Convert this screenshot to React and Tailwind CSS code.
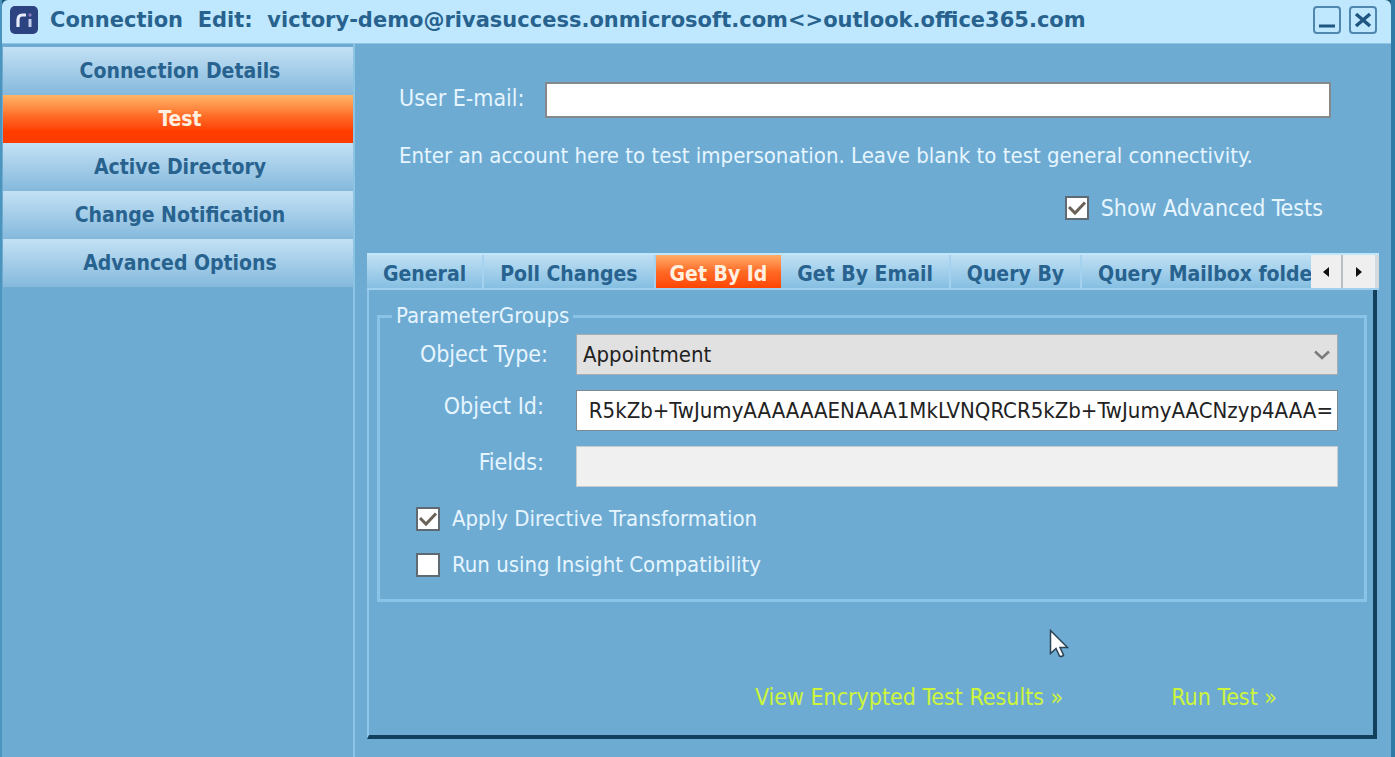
import { useEffect, useRef, useState } from "react";

const SECTIONS = [
  "Connection Details",
  "Test",
  "Active Directory",
  "Change Notification",
  "Advanced Options",
];

const TABS = [
  "General",
  "Poll Changes",
  "Get By Id",
  "Get By Email",
  "Query By",
  "Query Mailbox folders",
];

function TitleBar() {
  return (
    <header className="flex h-11 items-center rounded-t-md border-b border-[#8fc3e0] bg-[#bfe8ff] pr-3.5 pb-1 pl-2">
      <svg viewBox="0 0 28 28" className="mr-3 size-7 shrink-0" aria-hidden="true">
        <rect width="28" height="28" rx="5" fill="#2b4380" />
        <path d="M8 21v-7q0-5 4.500-5h3.500" fill="none" stroke="#e6ecfa" strokeWidth="3.200" />
        <path d="M20 13v8" fill="none" stroke="#c3cdea" strokeWidth="3" />
        <circle cx="20" cy="9" r="1.700" fill="#8a78b8" />
      </svg>
      <h1 className="min-w-0 flex-1 truncate font-['DejaVu_Sans',sans-serif] text-[21px] leading-7 font-bold whitespace-pre text-[#28628e]">
        Connection  Edit:  victory-demo@rivasuccess.onmicrosoft.com&lt;&gt;outlook.office365.com
      </h1>
      <div className="flex gap-2">
        <button
          type="button"
          aria-label="Minimize"
          className="flex size-7 items-center justify-center rounded-sm border-2 border-[#4f87ae]"
        >
          <svg viewBox="0 0 20 20" className="size-5" aria-hidden="true">
            <path d="M2 16h16" stroke="#1f5780" strokeWidth="3" />
          </svg>
        </button>
        <button
          type="button"
          aria-label="Close"
          className="flex size-7 items-center justify-center rounded-sm border-2 border-[#4f87ae]"
        >
          <svg viewBox="0 0 20 20" className="size-5" aria-hidden="true">
            <path d="M3 4l14 12M17 4L3 16" stroke="#1f5780" strokeWidth="3.500" />
          </svg>
        </button>
      </div>
    </header>
  );
}

function Sidebar({ active, onSelect }) {
  return (
    <nav className="w-[353px] shrink-0 border-r-2 border-[#8cc4e4] pt-[3px] pl-px">
      {SECTIONS.map((name) => (
        <button
          key={name}
          type="button"
          onClick={() => onSelect(name)}
          className={
            name === active
              ? "block h-12 w-full bg-linear-to-b from-[#ffb566] via-[#ff6a25] via-45% to-[#ff3c00] to-75% pt-0.5 pl-1 text-[21px] font-bold text-[#fff0e0]"
              : "block h-12 w-full bg-linear-to-b from-[#c3e1f4] to-[#84b9dc] pt-0.5 pl-1 text-[21px] font-bold text-[#28628e]"
          }
        >
          {name}
        </button>
      ))}
    </nav>
  );
}

function CheckBox({ label, defaultChecked }) {
  return (
    <label className="flex w-fit items-center gap-3 leading-7">
      <span className="relative size-6">
        <input
          type="checkbox"
          defaultChecked={defaultChecked}
          className="peer block size-6 appearance-none border-2 border-[#5f6a72] bg-white"
        />
        <svg
          viewBox="0 0 24 24"
          className="pointer-events-none absolute inset-0 hidden size-6 peer-checked:block"
          aria-hidden="true"
        >
          <path d="M4 11l6 6L20 6.500" fill="none" stroke="#6b6257" strokeWidth="3" />
        </svg>
      </span>
      {label}
    </label>
  );
}

function TabStrip({ active, onSelect }) {
  return (
    <div className="flex h-[37px] border-t-2 border-b-2 border-t-[#bfe6fb] border-b-[#a0d0ee] bg-linear-to-b from-[#bfe0f4] to-[#86bfe2]">
      <div role="tablist" className="flex min-w-0 flex-1 overflow-hidden">
        {TABS.map((name) => (
          <button
            key={name}
            type="button"
            role="tab"
            aria-selected={name === active}
            onClick={() => onSelect(name)}
            className={
              name === active
                ? "shrink-0 bg-linear-to-b from-[#ffac66] via-[#ff6a25] to-[#ff4400] px-3.5 pt-1 text-[21px] leading-7 font-bold text-[#fff0e0]"
                : "shrink-0 border-r-2 border-[#a5d2ee] px-4 pt-1 text-[21px] leading-7 font-bold whitespace-nowrap text-[#28628e]"
            }
          >
            {name}
          </button>
        ))}
      </div>
      <div className="flex bg-[#d3dbe0] pr-1">
        <button
          type="button"
          aria-label="Previous tabs"
          className="flex w-8 items-center justify-center border-r-2 border-[#b9bec2] bg-[#efefef]"
        >
          <svg viewBox="0 0 8 10" className="h-2.5 w-2" aria-hidden="true">
            <path d="M7 0v10L1 5z" fill="#111" />
          </svg>
        </button>
        <button
          type="button"
          aria-label="Next tabs"
          className="flex w-8 items-center justify-center bg-[#efefef]"
        >
          <svg viewBox="0 0 8 10" className="h-2.5 w-2" aria-hidden="true">
            <path d="M1 0v10l6-5z" fill="#111" />
          </svg>
        </button>
      </div>
    </div>
  );
}

function ParameterGroups() {
  const idRef = useRef(null);

  // long ids are shown from their end
  useEffect(() => {
    idRef.current.scrollLeft = idRef.current.scrollWidth;
  }, []);

  return (
    <fieldset className="mt-3 mr-1.5 ml-2 border-3 border-[#8ac3e8] pr-[26px] pb-5 pl-9">
      <legend className="-ml-6 px-1 text-[22px] leading-7">ParameterGroups</legend>

      <div className="grid grid-cols-[132px_1fr] items-start gap-x-7 gap-y-[15px] pt-1 text-[22px] leading-7">
        <label htmlFor="object-type" className="pt-1.5 text-right text-[23px]">
          Object Type:
        </label>
        <div className="relative">
          <select
            id="object-type"
            className="h-[41px] w-full appearance-none border border-[#a5adb3] bg-[#e1e1e1] px-1.5 text-[#222]"
          >
            <option>Appointment</option>
          </select>
          <svg
            viewBox="0 0 16 10"
            className="pointer-events-none absolute top-4 right-2 h-2.5 w-4"
            aria-hidden="true"
          >
            <path d="M1 1.500l7 6.500 7-6.500" fill="none" stroke="#7b7b7b" strokeWidth="2.500" />
          </svg>
        </div>

        <label htmlFor="object-id" className="pt-0.5 pr-1 text-right text-[23px]">
          Object Id:
        </label>
        <input
          id="object-id"
          ref={idRef}
          type="text"
          defaultValue="R5kZb+TwJumyAAAAAAENAAA1MkLVNQRCR5kZb+TwJumyAACNzyp4AAA="
          className="h-[41px] w-full border border-[#7d8a93] bg-white px-1 text-right text-[#222]"
        />

        <label htmlFor="fields" className="pt-0.5 pr-1 text-right text-[23px]">
          Fields:
        </label>
        <input
          id="fields"
          type="text"
          disabled
          className="h-[41px] w-full border border-[#c5ccd0] bg-[#f0f0f0] px-1"
        />
      </div>

      <div className="mt-[18px] grid gap-[18px] text-[22px]">
        <CheckBox label="Apply Directive Transformation" defaultChecked />
        <CheckBox label="Run using Insight Compatibility" />
      </div>
    </fieldset>
  );
}

export default function App() {
  const [section, setSection] = useState("Test");
  const [tab, setTab] = useState("Get By Id");

  return (
    <div className="flex min-h-screen flex-col border-r-4 border-l-2 border-r-[#2d7ba6] border-l-[#4b94bd] bg-[#1f5a7d] font-['DejaVu_Sans_Condensed','DejaVu_Sans',sans-serif] text-[#e6f5ff]">
      <TitleBar />
      <div className="flex flex-1 bg-[#6dabd2]">
        <Sidebar active={section} onSelect={setSection} />

        <main className="flex min-w-0 flex-1 flex-col pr-3 pb-[18px] pl-3">
          <div className="pt-[38px] pr-12 pl-8">
            <div className="flex items-start gap-5">
              <label htmlFor="email" className="pt-0.5 text-[23px] leading-7">
                User E-mail:
              </label>
              <input
                id="email"
                type="email"
                className="h-9 min-w-0 flex-1 border-2 border-[#85898c] bg-white px-1 text-[22px] text-[#222]"
              />
            </div>
            <p className="mt-6 text-[22px] leading-7">
              Enter an account here to test impersonation. Leave blank to test general connectivity.
            </p>
            <div className="mt-6 flex justify-end pr-2 text-[23px]">
              <CheckBox label="Show Advanced Tests" defaultChecked />
            </div>
          </div>

          <section className="mt-[31px] flex flex-1 flex-col">
            <TabStrip active={tab} onSelect={setTab} />
            <div className="mr-0.5 flex flex-1 flex-col border-r-4 border-b-4 border-l-2 border-r-[#123f5c] border-b-[#123f5c] border-l-[#8fc6ea]">
              <ParameterGroups />
              <div className="relative mt-auto flex justify-end gap-[108px] pr-24 pb-6 text-[23px] leading-7 text-[#cdf53c]">
                <a href="#results">View Encrypted Test Results »</a>
                <a href="#run">Run Test »</a>
                <svg
                  viewBox="0 0 20 30"
                  className="pointer-events-none absolute right-[304px] bottom-[76px] h-[30px] w-5"
                  aria-hidden="true"
                >
                  <path
                    d="M1.500 1.500v23l5.500-5 3.500 7.500q2.500 1.500 4-1L11 18.500h7.500z"
                    fill="#fff"
                    stroke="#2b4356"
                    strokeWidth="1.500"
                  />
                </svg>
              </div>
            </div>
          </section>
        </main>
      </div>
    </div>
  );
}
